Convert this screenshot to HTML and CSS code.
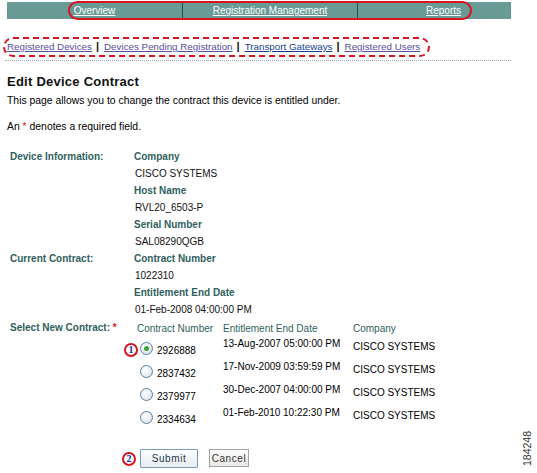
FILE: index.html
```html
<!DOCTYPE html>
<html>
<head>
<meta charset="utf-8">
<link rel="stylesheet" href="styles.css">
</head>
<body>
<div class="page">
  <div class="nav">
    <div class="nav-cell c1"><a href="#">Overview</a></div>
    <div class="nav-cell c2"><a href="#">Registration Management</a></div>
    <div class="nav-cell c3"><a href="#">Reports</a></div>
    <div class="ring-solid"></div>
  </div>

  <div class="subnav">
    <a href="#" class="visited">Registered Devices</a><span class="sep">|</span><a href="#" class="visited">Devices Pending Registration</a><span class="sep">|</span><a href="#" class="fresh">Transport Gateways</a><span class="sep">|</span><a href="#" class="visited">Registered Users</a>
    <div class="ring-dashed"></div>
  </div>
  <div class="dotted"></div>

  <h1 class="title">Edit Device Contract</h1>
  <p class="desc">This page allows you to change the contract this device is entitled under.</p>
  <p class="req">An <span class="star">*</span> denotes a required field.</p>

  <div class="info">
    <div class="lbl">Device Information:</div><div class="key">Company</div>
    <div></div><div class="val">CISCO SYSTEMS</div>
    <div></div><div class="key">Host Name</div>
    <div></div><div class="val">RVL20_6503-P</div>
    <div></div><div class="key">Serial Number</div>
    <div></div><div class="val">SAL08290QGB</div>
    <div class="lbl">Current Contract:</div><div class="key">Contract Number</div>
    <div></div><div class="val">1022310</div>
    <div></div><div class="key">Entitlement End Date</div>
    <div></div><div class="val">01-Feb-2008 04:00:00 PM</div>
  </div>

  <div class="select">
    <div class="lbl sel-lbl">Select New Contract: <span class="star">*</span></div>
    <div class="contracts">
      <div class="crow head">
        <div class="col-num">Contract Number</div>
        <div class="col-date">Entitlement End Date</div>
        <div class="col-co">Company</div>
      </div>
      <div class="crow">
        <div class="col-num"><span class="badge b1">1</span><span class="radio checked"></span><span class="num">2926888</span></div>
        <div class="col-date">13-Aug-2007 05:00:00 PM</div>
        <div class="col-co">CISCO SYSTEMS</div>
      </div>
      <div class="crow">
        <div class="col-num"><span class="radio"></span><span class="num">2837432</span></div>
        <div class="col-date">17-Nov-2009 03:59:59 PM</div>
        <div class="col-co">CISCO SYSTEMS</div>
      </div>
      <div class="crow">
        <div class="col-num"><span class="radio"></span><span class="num">2379977</span></div>
        <div class="col-date">30-Dec-2007 04:00:00 PM</div>
        <div class="col-co">CISCO SYSTEMS</div>
      </div>
      <div class="crow">
        <div class="col-num"><span class="radio"></span><span class="num">2334634</span></div>
        <div class="col-date">01-Feb-2010 10:22:30 PM</div>
        <div class="col-co">CISCO SYSTEMS</div>
      </div>
    </div>
  </div>

  <div class="buttons">
    <span class="badge b2">2</span>
    <button class="btn submit">Submit</button>
    <button class="btn cancel">Cancel</button>
  </div>

  <div class="figid">184248</div>
</div>
</body>
</html>
```
FILE: styles.css
```css
html, body {
  margin: 0;
  padding: 0;
  background: #ffffff;
}
.page {
  position: relative;
  width: 537px;
  height: 473px;
  overflow: hidden;
  padding-top: 2px;
  box-sizing: border-box;
  font-family: "Liberation Sans", Arial, sans-serif;
  font-size: 10px;
  color: #000000;
}
.nav {
  position: relative;
  display: flex;
  margin-left: 7px;
  width: 504px;
  height: 17px;
  background: #689a96;
}
.nav-cell {
  display: flex;
  align-items: center;
  justify-content: center;
  height: 17px;
  box-sizing: border-box;
}
.nav-cell a {
  color: #ffffff;
  font-size: 10px;
  text-decoration: underline;
}
.c1 { width: 176px; border-right: 1px solid #2e4d4b; }
.c2 { width: 175px; border-right: 1px solid #2e4d4b; }
.c3 { width: 153px; padding-left: 18px; }
.ring-solid {
  position: absolute;
  left: 61px;
  top: -1px;
  width: 404px;
  height: 19px;
  border: 2px solid #d7141f;
  border-radius: 10px;
  box-sizing: border-box;
}
.subnav {
  position: relative;
  margin-top: 20px;
  margin-left: 7px;
  height: 15px;
  line-height: 15px;
  font-size: 9.8px;
  white-space: nowrap;
}
.subnav a {
  text-decoration: underline;
}
.subnav a.visited { color: #5a4d9c; }
.subnav a.fresh { color: #123f8d; }
.sep {
  display: inline-block;
  margin: 0 5px 0 4px;
  color: #111111;
  font-weight: bold;
  font-size: 11px;
}
.ring-dashed {
  position: absolute;
  left: -4px;
  top: -2px;
  width: 427px;
  height: 20px;
  border: 2px dashed #d7141f;
  border-radius: 10px;
  box-sizing: border-box;
}
.dotted {
  margin: 6px 26px 0 5px;
  border-top: 1px dotted #a8a8a8;
  height: 0;
}
.title {
  margin: 13px 0 0 7px;
  font-size: 13px;
  line-height: 16px;
  font-weight: bold;
  letter-spacing: 0.25px;
  color: #111111;
}
.desc {
  margin: 4px 0 0 7px;
  line-height: 14px;
  font-size: 10.4px;
}
.req {
  margin: 12px 0 0 7px;
  line-height: 14px;
  font-size: 10.4px;
}
.star {
  color: #d4141c;
}
.info {
  display: grid;
  grid-template-columns: 124px 1fr;
  margin: 14px 0 0 10px;
  grid-auto-rows: 17px;
  align-items: center;
}
.lbl {
  font-weight: bold;
  color: #2f5f5d;
}
.key {
  font-weight: bold;
  color: #2f5f5d;
}
.val {
  color: #111111;
  padding-left: 1px;
}
.select {
  display: flex;
  margin-left: 10px;
  margin-top: 1px;
}
.sel-lbl {
  width: 127px;
  line-height: 17px;
}
.contracts {
  display: flex;
  flex-direction: column;
}
.crow {
  display: flex;
  height: 23px;
  align-items: center;
  position: relative;
}
.crow.head {
  height: 16px;
  box-sizing: border-box;
  color: #2f5f5d;
  align-items: flex-start;
  padding-top: 4px;
}
.col-num {
  width: 86px;
  display: flex;
  align-items: center;
  position: relative;
}
.col-date {
  width: 130px;
}
.crow:not(.head) .col-date {
  align-self: flex-start;
  padding-top: 3px;
}
.crow:not(.head) .col-num {
  padding-top: 3px;
}
.col-co {
  width: 110px;
}
.radio {
  display: inline-block;
  width: 11px;
  height: 11px;
  margin-left: 3px;
  margin-right: 4px;
  border: 1px solid #5f7f9c;
  border-radius: 50%;
  background: radial-gradient(circle at 35% 35%, #ffffff 0%, #e9eef3 55%, #c9d3dd 100%);
  position: relative;
  flex: none;
}
.radio.checked::after {
  content: "";
  position: absolute;
  left: 3px;
  top: 3px;
  width: 5px;
  height: 5px;
  border-radius: 50%;
  background: #3aa43a;
}
.num {
  position: relative;
  top: 2px;
}
.badge {
  position: absolute;
  width: 14px;
  height: 14px;
  box-sizing: border-box;
  border: 2px solid #d7141f;
  border-radius: 50%;
  background: #ffffff;
  color: #1a2fa0;
  font-family: "Liberation Serif", "Times New Roman", serif;
  font-weight: bold;
  font-size: 10px;
  line-height: 10px;
  text-align: center;
}
.b1 {
  left: -13px;
  top: 4px;
}
.buttons {
  position: relative;
  display: flex;
  align-items: flex-start;
  gap: 11px;
  margin: 22px 0 0 140px;
}
.b2 {
  left: -18px;
  top: 3px;
}
.btn {
  font-family: "Liberation Sans", Arial, sans-serif;
  font-size: 10px;
  letter-spacing: 0.6px;
  padding: 0;
  color: #2a3a4a;
}
.submit {
  width: 58px;
  height: 19px;
  border: 1px solid #7d9bb7;
  background: linear-gradient(#ffffff, #e6ecf2);
  border-radius: 1px;
}
.cancel {
  width: 40px;
  height: 18px;
  border: 1px solid #a4a4a4;
  background: linear-gradient(#fcfcfc, #eaeaea);
  color: #333333;
}
.figid {
  position: absolute;
  left: 507px;
  top: 443px;
  width: 40px;
  height: 11px;
  font-size: 10.5px;
  line-height: 11px;
  text-align: center;
  transform: rotate(-90deg);
  color: #333333;
}
```
